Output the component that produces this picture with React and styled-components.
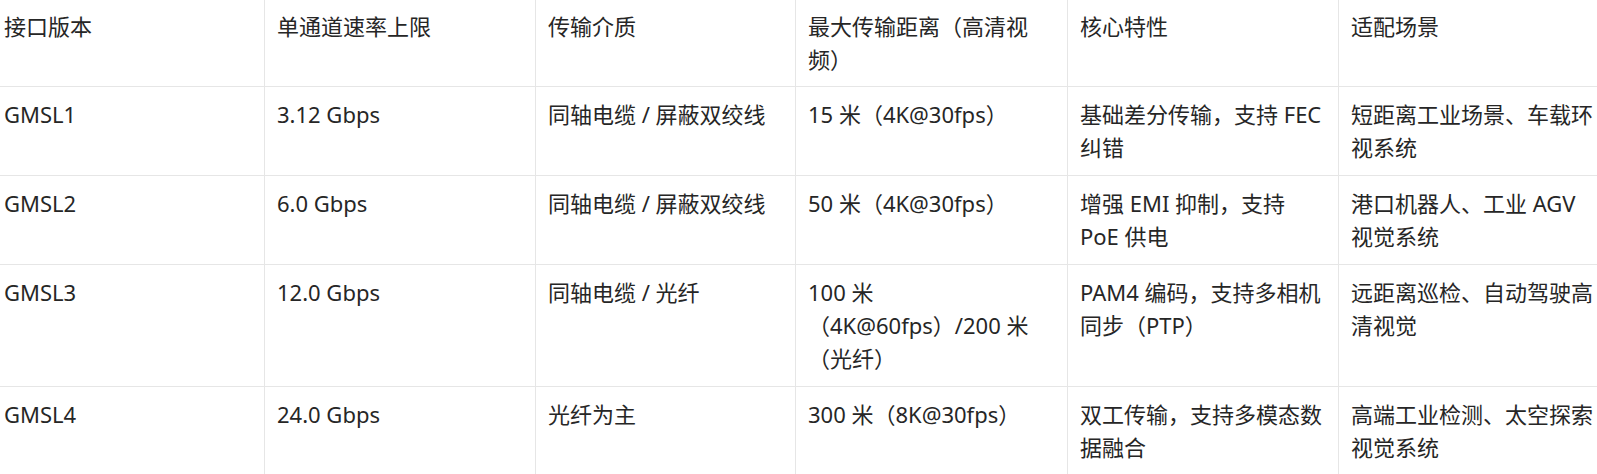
import React from "react";
import styled, { createGlobalStyle } from "styled-components";

const GlobalStyle = createGlobalStyle`
  html, body {
    margin: 0;
    padding: 0;
    background: #ffffff;
  }

  body {
    font-family: "Noto Sans", "Noto Sans CJK SC", sans-serif;
    overflow: hidden;
  }
`;

const Page = styled.div`
  width: 1597px;
  height: 474px;
  overflow: hidden;
  background: #ffffff;
`;

const Table = styled.table`
  width: 1618px;
  margin-left: -9px;
  border-collapse: collapse;
  table-layout: fixed;
  font-size: 22px;
  line-height: 33px;
  color: #262626;
`;

const Cell = styled.td`
  width: ${(p) => p.$w}px;
  padding: 11px 12px;
  vertical-align: top;
  text-align: left;
  font-weight: 400;
  border: 1px solid #e6e6e6;
  border-top: none;
  box-sizing: border-box;
  word-break: normal;
  overflow-wrap: break-word;
`;

const HeadCell = styled(Cell).attrs({ as: "th" })`
  padding: 10px 12px;
`;

const widths = [273, 271, 260, 272, 271, 271];

const headers = [
  "接口版本",
  "单通道速率上限",
  "传输介质",
  "最大传输距离（高清视频）",
  "核心特性",
  "适配场景",
];

const rows = [
  ["GMSL1", "3.12 Gbps", "同轴电缆 / 屏蔽双绞线", "15 米（4K@30fps）", "基础差分传输，支持 FEC 纠错", "短距离工业场景、车载环视系统"],
  ["GMSL2", "6.0 Gbps", "同轴电缆 / 屏蔽双绞线", "50 米（4K@30fps）", "增强 EMI 抑制，支持 PoE 供电", "港口机器人、工业 AGV 视觉系统"],
  ["GMSL3", "12.0 Gbps", "同轴电缆 / 光纤", "100 米（4K@60fps）/200 米（光纤）", "PAM4 编码，支持多相机同步（PTP）", "远距离巡检、自动驾驶高清视觉"],
  ["GMSL4", "24.0 Gbps", "光纤为主", "300 米（8K@30fps）", "双工传输，支持多模态数据融合", "高端工业检测、太空探索视觉系统"],
];

export default function App() {
  return (
    <Page>
      <GlobalStyle />
      <Table>
        <colgroup>
          {widths.map((w, i) => (
            <col key={i} style={{ width: w }} />
          ))}
        </colgroup>
        <thead>
          <tr>
            {headers.map((h, i) => (
              <HeadCell key={i} $w={widths[i]}>{h}</HeadCell>
            ))}
          </tr>
        </thead>
        <tbody>
          {rows.map((r, ri) => (
            <tr key={ri}>
              {r.map((c, ci) => (
                <Cell key={ci} $w={widths[ci]}>{c}</Cell>
              ))}
            </tr>
          ))}
        </tbody>
      </Table>
    </Page>
  );
}
